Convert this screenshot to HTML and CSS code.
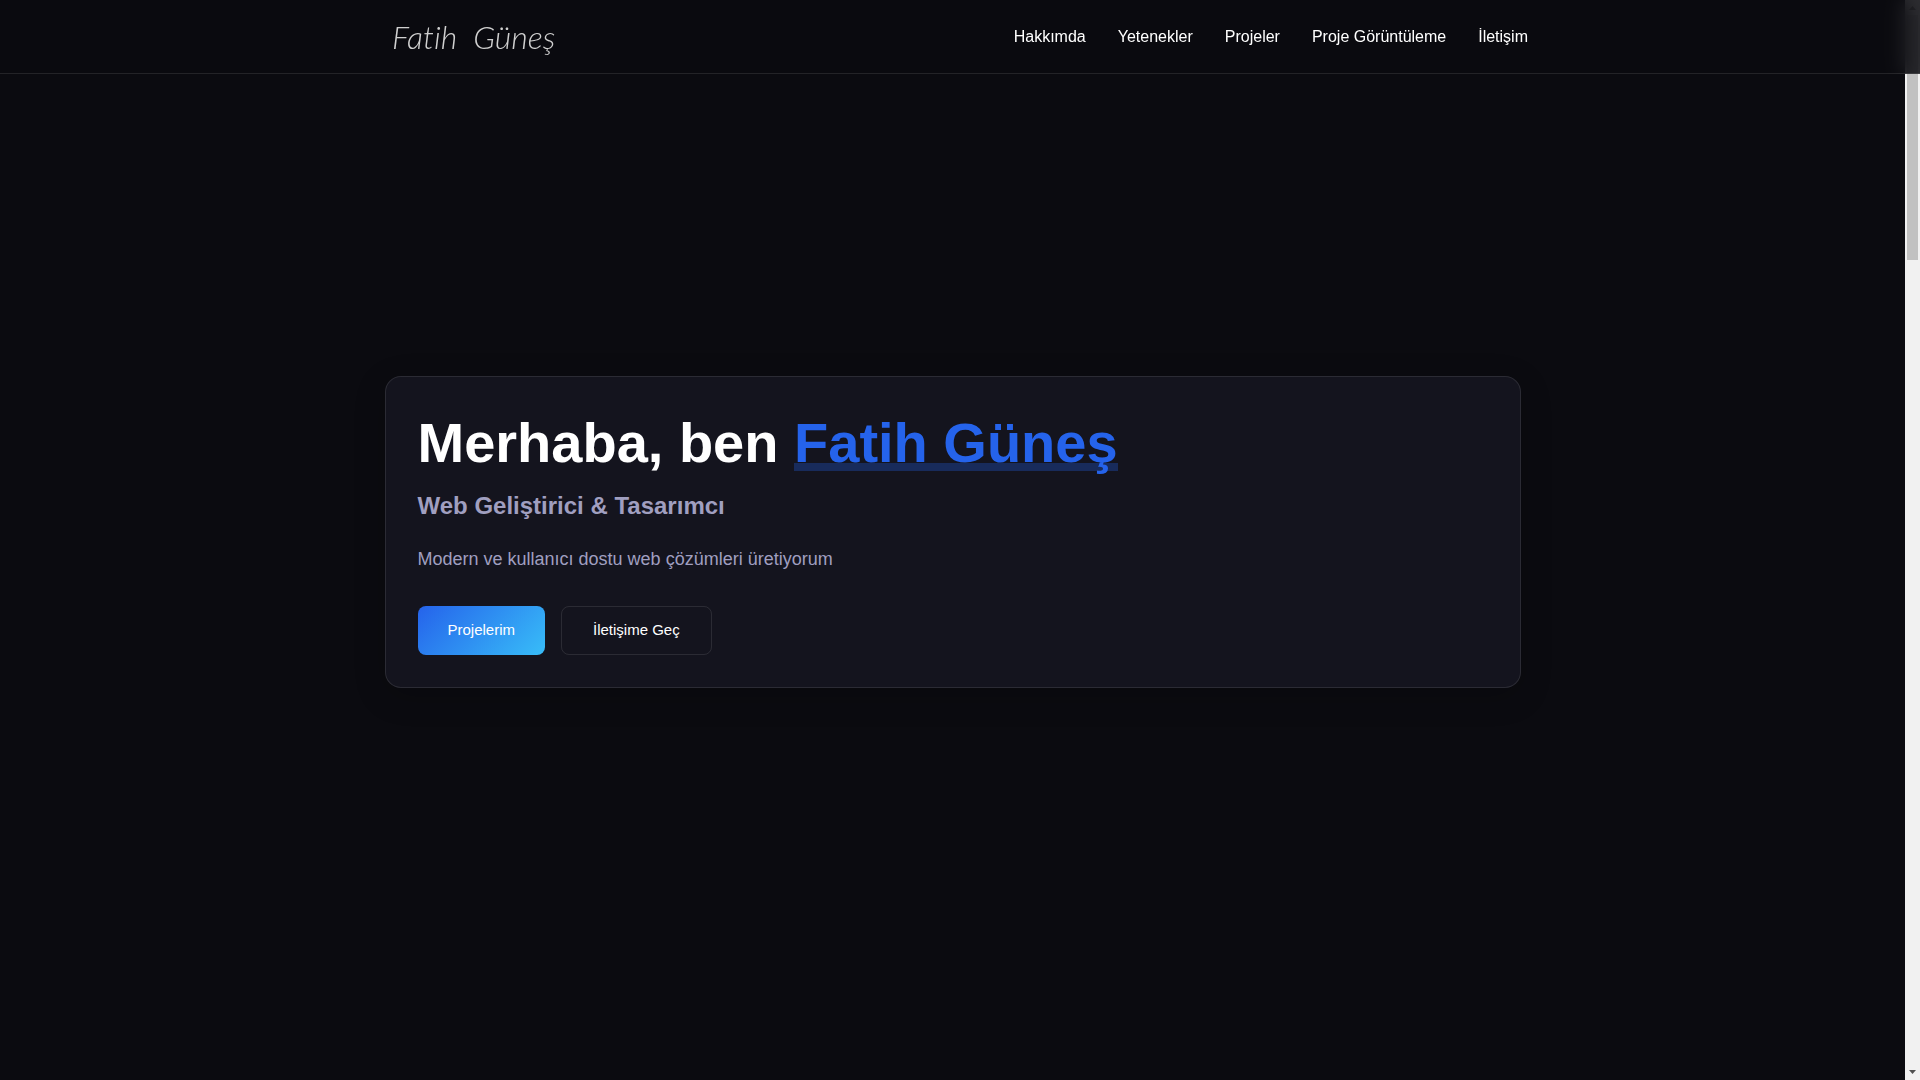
FILE: index.html
```html
<!DOCTYPE html>
<html lang="tr">
<head>
    <meta charset="UTF-8">
    <meta name="viewport" content="width=device-width, initial-scale=1.0">
    <title>Fatih Güneş</title>
    <link rel="stylesheet" href="styles.css">
</head>
<body>
    <header class="header">
        <div class="header-inner">
            <a href="#home" class="logo"><span>Fatih</span> <span>Güneş</span></a>
            <nav class="nav">
                <a href="#about">Hakkımda</a>
                <a href="#skills">Yetenekler</a>
                <a href="#projects">Projeler</a>
                <a href="#preview">Proje Görüntüleme</a>
                <a href="#contact">İletişim</a>
            </nav>
        </div>
    </header>

    <main>
        <section class="hero" id="home">
            <div class="hero-card">
                <h1>Merhaba, ben <span class="highlight">Fatih Güneş</span></h1>
                <h2>Web Geliştirici &amp; Tasarımcı</h2>
                <p>Modern ve kullanıcı dostu web çözümleri üretiyorum</p>
                <div class="hero-buttons">
                    <a href="#projects" class="btn btn-primary">Projelerim</a>
                    <a href="#contact" class="btn btn-secondary">İletişime Geç</a>
                </div>
            </div>
        </section>
    </main>

    <div class="scrollbar" aria-hidden="true">
        <svg class="scroll-arrow" viewBox="0 0 15 15"><path d="M4 10 L7.5 6 L11 10 Z"/></svg>
        <div class="scroll-track">
            <div class="scroll-thumb"></div>
        </div>
        <svg class="scroll-arrow" viewBox="0 0 15 15"><path d="M4 5 L11 5 L7.5 9 Z"/></svg>
    </div>
</body>
</html>
```
FILE: styles.css
```css
* {
    margin: 0;
    padding: 0;
    box-sizing: border-box;
}
body {
    font-family: "Liberation Sans", Arial, sans-serif;
    line-height: 1.6;
    color: #ffffff;
    background-color: #0b0b10;
}
a {
    color: inherit;
    text-decoration: none;
}
main {
    padding-right: 15px; /* space for the scrollbar */
}

/* Header */
.header {
    position: fixed;
    top: 0;
    left: 0;
    width: 100%;
    z-index: 10;
    background-color: rgba(10, 10, 15, 0.85);
    backdrop-filter: blur(10px);
    border-bottom: 1px solid rgba(255, 255, 255, 0.1);
}
.header-inner {
    display: flex;
    align-items: center;
    justify-content: space-between;
    max-width: 1200px;
    height: 73px;
    margin: 0 auto;
    padding: 0 32px;
}
.logo {
    display: flex;
    gap: 16px;
    font-family: Lato, "Liberation Sans", sans-serif;
    font-size: 32px;
    font-style: italic;
    font-weight: 300;
    font-variant-ligatures: none;
    color: #d0d0d0;
}
.nav {
    display: flex;
    gap: 32px;
}

/* Hero */
.hero {
    display: flex;
    align-items: center;
    max-width: 1200px;
    min-height: 100vh;
    margin: 0 auto;
    padding: 0 32px 16px;
}
.hero-card {
    position: relative;
    z-index: 1;
    width: 100%;
    padding: 32px;
    background-color: #14141e;
    border: 1px solid rgba(255, 255, 255, 0.1);
    border-radius: 16px;
    box-shadow: 0 8px 32px rgba(0, 0, 0, 0.2);
}
.hero-card h1 {
    margin-bottom: 16px;
    font-size: 56px;
    line-height: 67px;
}
.hero-card h2 {
    margin-bottom: 24px;
    font-size: 24px;
    line-height: 28px;
    color: #a09fc0;
}
.hero-card p {
    margin-bottom: 32px;
    font-size: 18px;
    line-height: 30px;
    color: #a09fc0;
}
.highlight {
    position: relative;
    color: #2563eb;
}
.highlight::after {
    content: "";
    position: absolute;
    left: 0;
    bottom: 3px;
    z-index: -1;
    width: 100%;
    height: 8px;
    background-color: rgba(37, 99, 235, 0.3);
}
.hero-buttons {
    display: flex;
    gap: 16px;
}
.btn {
    padding: 12px 30px 13px;
    font-size: 15px;
    line-height: 24px;
    border-radius: 8px;
}
.btn-primary {
    background: linear-gradient(135deg, #2563eb, #38bdf8);
}
.btn-secondary {
    padding: 11px 31px 12px;
    border: 1px solid rgba(255, 255, 255, 0.1);
}

/* Scrollbar */
.scrollbar {
    position: fixed;
    top: 0;
    right: 0;
    bottom: 0;
    z-index: 5;
    display: flex;
    flex-direction: column;
    width: 15px;
    background-color: #f1f1f1;
}
.scroll-arrow {
    width: 15px;
    height: 15px;
    fill: #505050;
}
.scroll-track {
    flex: 1;
    padding: 0 2px;
}
.scroll-thumb {
    height: 245px;
    background-color: #c1c1c1;
}
```
